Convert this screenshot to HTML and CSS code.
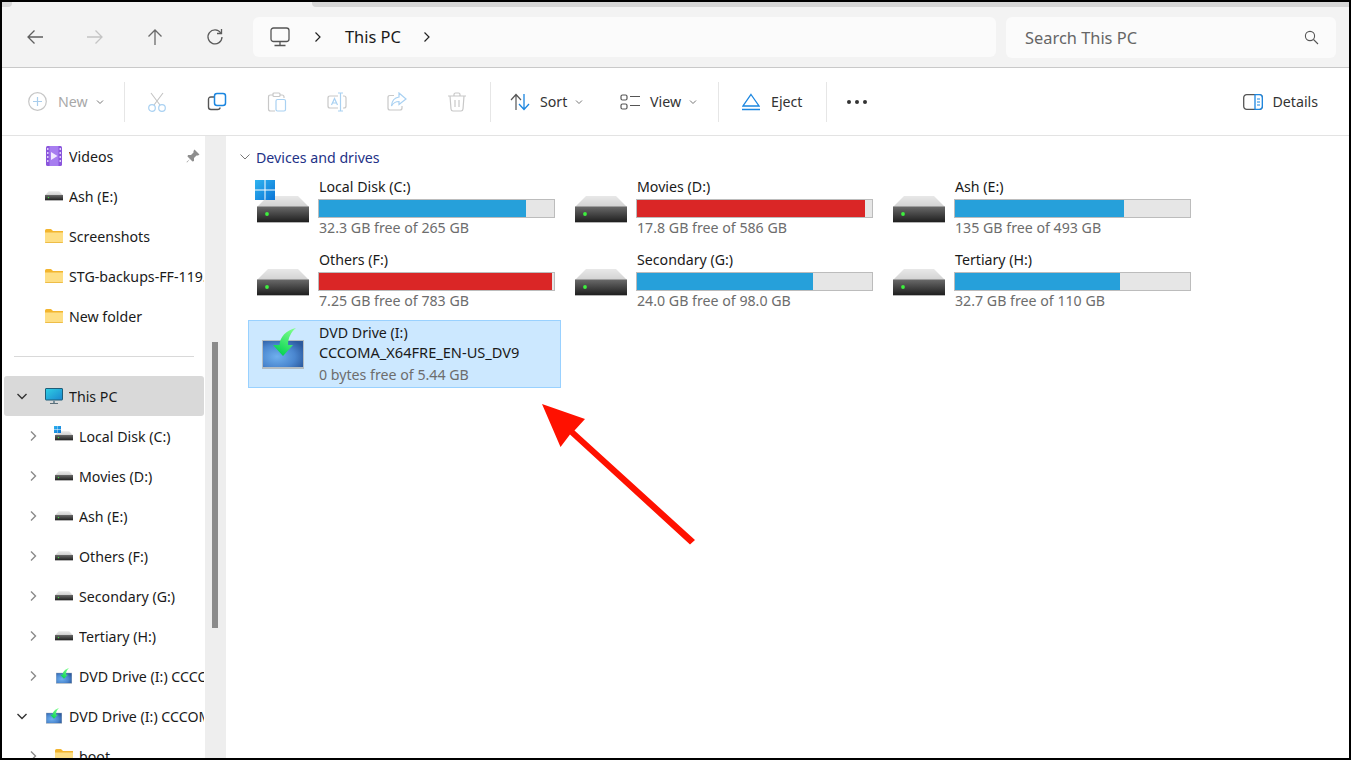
FILE: index.html
```html
<!DOCTYPE html>
<html lang="en">
<head>
<meta charset="utf-8">
<title>This PC</title>
<link rel="stylesheet" href="styles.css">
</head>
<body>
<svg class="defs" aria-hidden="true">
  <defs>
    <linearGradient id="face" x1="0" y1="0" x2="0" y2="1"><stop offset="0" stop-color="#6a6a6a"/><stop offset="1" stop-color="#1f1f1f"/></linearGradient>
    <linearGradient id="lid" x1="0" y1="0" x2="0" y2="1"><stop offset="0" stop-color="#e8e8e8"/><stop offset="1" stop-color="#d2d2d2"/></linearGradient>
    <linearGradient id="win" x1="0" y1="0" x2="1" y2="1"><stop offset="0" stop-color="#2fb4f0"/><stop offset="1" stop-color="#0a74d6"/></linearGradient>
    <radialGradient id="disc" cx="0.35" cy="0.6" r="0.75"><stop offset="0" stop-color="#6fb0ee"/><stop offset="0.6" stop-color="#4a86cf"/><stop offset="1" stop-color="#2c5a9e"/></radialGradient>
    <linearGradient id="grn" x1="0.8" y1="0" x2="0.3" y2="1"><stop offset="0" stop-color="#7dff8a"/><stop offset="1" stop-color="#00d050"/></linearGradient>
    <linearGradient id="pc" x1="0" y1="0" x2="1" y2="1"><stop offset="0" stop-color="#2fd0e4"/><stop offset="1" stop-color="#1a86cf"/></linearGradient>
    <symbol id="drive" viewBox="0 0 52 27">
      <path d="M11 0H41L52 11H0Z" fill="url(#lid)"/>
      <rect y="10.5" width="52" height="15.5" fill="url(#face)"/>
      <rect y="26" width="52" height="1" fill="#b4b4b4"/>
      <circle cx="10" cy="18" r="1.9" fill="#3ef03e"/>
    </symbol>
    <symbol id="winlogo" viewBox="0 0 20 20">
      <path d="M0 0H9.5V9.5H0ZM10.5 0H20V9.5H10.5ZM0 10.5H9.5V20H0ZM10.5 10.5H20V20H10.5Z" fill="url(#win)"/>
    </symbol>
    <symbol id="dvd" viewBox="0 0 42 41">
      <rect y="12" width="42" height="29" fill="#b3bcc2"/>
      <rect x="1" y="13" width="40" height="26" fill="url(#disc)"/>
      <path d="M11 17H17.5C18 9 24 2 34 0C29 4 26 10 26 17H31L21 28Z" fill="url(#grn)"/>
    </symbol>
    <symbol id="folder" viewBox="0 0 18 14">
      <path d="M0 1.5Q0 0 1.5 0H6L8 2H18V4H0Z" fill="#f3b52e"/>
      <path d="M0 3.5H18V13Q18 14 17 14H1Q0 14 0 13Z" fill="#fedf85"/>
      <path d="M0 13H18V13.2Q18 14 17 14H1Q0 14 0 13.2Z" fill="#eebd47"/>
    </symbol>
    <symbol id="video" viewBox="0 0 16 20">
      <rect width="16" height="20" rx="1.5" fill="#8a55dc"/>
      <rect x="3.5" y="0" width="9" height="20" fill="#a77df0"/>
      <path d="M5 6L11.5 10L5 14Z" fill="#f1e9ff"/>
      <path d="M1 2h1.5v2H1zM1 6h1.5v2H1zM1 10h1.5v2H1zM1 14h1.5v2H1zM13.5 2H15v2h-1.500zM13.500 6H15v2h-1.500zM13.500 10H15v2h-1.500zM13.500 14H15v2h-1.500z" fill="#dccdfa"/>
    </symbol>
    <symbol id="thispc" viewBox="0 0 18 16">
      <rect x="0.500" y="0.500" width="17" height="11.500" rx="0.500" fill="url(#pc)" stroke="#1f5d78"/>
      <rect x="8" y="12" width="2" height="3" fill="#78909c"/>
      <rect x="5" y="15" width="8" height="1" fill="#5b6f7a"/>
    </symbol>
    <symbol id="chev-r" viewBox="0 0 12 12"><path d="M4 1.500L8.500 6L4 10.500" fill="none" stroke="#8a8a8a" stroke-width="1.400"/></symbol>
    <symbol id="chev-a" viewBox="0 0 12 12"><path d="M3.500 1.500L8 6L3.500 10.500" fill="none" stroke="#222" stroke-width="1.200"/></symbol>
    <symbol id="chev-d" viewBox="0 0 12 12"><path d="M1.500 4L6 8.500L10.500 4" fill="none" stroke="#333" stroke-width="1.400"/></symbol>
    <symbol id="caret" viewBox="0 0 8 6"><path d="M1 1.500L4 4.500L7 1.500" fill="none" stroke="#777" stroke-width="1"/></symbol>
  </defs>
</svg>

<div class="window">
  <div class="tabstrip"><span class="tab-left"></span><span class="tab-gap"></span><span class="tab-right"></span></div>

  <header class="navbar">
    <button class="nav-btn">
      <svg width="18" height="16" viewBox="0 0 18 16"><path d="M17 8H2M8.500 1.500L2 8L8.500 14.500" fill="none" stroke="#5f5f5f" stroke-width="1.300"/></svg>
    </button>
    <button class="nav-btn">
      <svg width="18" height="16" viewBox="0 0 18 16"><path d="M1 8H16M9.500 1.500L16 8L9.500 14.500" fill="none" stroke="#c4c4c4" stroke-width="1.300"/></svg>
    </button>
    <button class="nav-btn">
      <svg width="16" height="18" viewBox="0 0 16 18"><path d="M8 17V2M1.500 8.500L8 2L14.500 8.500" fill="none" stroke="#6a6a6a" stroke-width="1.300"/></svg>
    </button>
    <button class="nav-btn">
      <svg width="18" height="18" viewBox="0 0 18 18"><path d="M14.800 5A7 7 0 1 0 16 9" fill="none" stroke="#5a5a5a" stroke-width="1.300"/><path d="M15.500 1V5.500H11" fill="none" stroke="#5a5a5a" stroke-width="1.300"/></svg>
    </button>
    <div class="address">
      <svg class="addr-pc" width="20" height="20" viewBox="0 0 20 20"><rect x="1" y="1" width="18" height="13.500" rx="2.500" fill="none" stroke="#555" stroke-width="1.300"/><path d="M10 14.500V18M4.500 18.500H15.500" fill="none" stroke="#555" stroke-width="1.300"/></svg>
      <svg class="addr-chev" width="12" height="12"><use href="#chev-a"/></svg>
      <span class="addr-text">This PC</span>
      <svg class="addr-chev2" width="12" height="12"><use href="#chev-a"/></svg>
    </div>
    <div class="search">
      <span class="search-text">Search This PC</span>
      <svg width="15" height="15" viewBox="0 0 15 15"><circle cx="6" cy="6" r="4.600" fill="none" stroke="#555" stroke-width="1.100"/><path d="M9.500 9.500L14 14" stroke="#555" stroke-width="1.100"/></svg>
    </div>
  </header>

  <div class="cmdbar">
    <div class="cmd-new">
      <svg width="19" height="19" viewBox="0 0 19 19"><circle cx="9.500" cy="9.500" r="8.800" fill="none" stroke="#c6c6c6" stroke-width="1.200"/><path d="M9.500 5V14M5 9.500H14" stroke="#a9cdec" stroke-width="1.200"/></svg>
      <span class="cmd-label disabled">New</span>
      <svg class="caret" width="8" height="6"><use href="#caret"/></svg>
    </div>
    <span class="sep"></span>
    <div class="icon-btn">
      <svg width="20" height="20" viewBox="0 0 20 20"><path d="M4 1L13 13M16 1L7 13" fill="none" stroke="#c4c4c4" stroke-width="1.100"/><circle cx="5" cy="16" r="3.300" fill="none" stroke="#a9d1f2" stroke-width="1.200"/><circle cx="15" cy="16" r="3.300" fill="none" stroke="#a9d1f2" stroke-width="1.200"/></svg>
    </div>
    <div class="icon-btn">
      <svg width="20" height="20" viewBox="0 0 20 20"><path d="M7 5H4Q1.500 5 1.500 7.500V15Q1.500 17.500 4 17.500H10.500Q13 17.500 13 15.500" fill="none" stroke="#555" stroke-width="1.400"/><rect x="7.500" y="1.500" width="11" height="12" rx="2.500" fill="none" stroke="#1b86e0" stroke-width="1.500"/></svg>
    </div>
    <div class="icon-btn">
      <svg width="20" height="20" viewBox="0 0 20 20"><path d="M6 3H3.500Q1.500 3 1.500 5V17Q1.500 19 3.500 19H8M13 3H15Q17 3 17 5V6" fill="none" stroke="#c8c8c8" stroke-width="1.200"/><rect x="6" y="1" width="7" height="3.500" rx="1" fill="none" stroke="#c8c8c8" stroke-width="1.200"/><rect x="9" y="7.500" width="9.500" height="11.500" rx="1.500" fill="none" stroke="#a9d1f2" stroke-width="1.200"/></svg>
    </div>
    <div class="icon-btn">
      <svg width="20" height="20" viewBox="0 0 20 20"><path d="M11 4H3Q1 4 1 6V14Q1 16 3 16H11M16 4H17Q19 4 19 6V14Q19 16 17 16H16" fill="none" stroke="#c8c8c8" stroke-width="1.200"/><path d="M11 1H16M13.500 1V19M11 19H16M4.500 13L7.500 6.500L10.500 13M5.500 11H9.500" fill="none" stroke="#a9d1f2" stroke-width="1.200"/></svg>
    </div>
    <div class="icon-btn">
      <svg width="20" height="20" viewBox="0 0 20 20"><path d="M7 3.500H3Q1 3.500 1 5.500V16Q1 18 3 18H13Q15 18 15 16V14" fill="none" stroke="#c8c8c8" stroke-width="1.200"/><path d="M12 1L19 7L12 12.500V9.500Q7 9.500 4.500 14Q5 6 12 5Z" fill="none" stroke="#a9d1f2" stroke-width="1.200"/></svg>
    </div>
    <div class="icon-btn">
      <svg width="20" height="20" viewBox="0 0 20 20"><path d="M1 4H19M7 4V2.500Q7 1 8.500 1H11.500Q13 1 13 2.500V4M3 4L4 17Q4.200 19 6 19H14Q15.800 19 16 17L17 4M8 8V15M12 8V15" fill="none" stroke="#c8c8c8" stroke-width="1.200"/></svg>
    </div>
    <span class="sep sep-b"></span>
    <div class="cmd-menu cmd-sort">
      <svg width="20" height="18" viewBox="0 0 20 18"><path d="M6 17V2M1 7L6 1.500L11 7" fill="none" stroke="#555" stroke-width="1.200"/><path d="M14 1V16M9 11L14 16.500L19 11" fill="none" stroke="#1b86e0" stroke-width="1.300"/></svg>
      <span class="cmd-label">Sort</span>
      <svg class="caret" width="8" height="6"><use href="#caret"/></svg>
    </div>
    <div class="cmd-menu cmd-view">
      <svg width="20" height="16" viewBox="0 0 20 16"><rect x="1" y="1" width="6" height="5" rx="1.500" fill="none" stroke="#555" stroke-width="1.200"/><rect x="1" y="10" width="6" height="5" rx="1.500" fill="none" stroke="#555" stroke-width="1.200"/><path d="M10 2.500H20M10 11.500H20" stroke="#555" stroke-width="1.200"/></svg>
      <span class="cmd-label">View</span>
      <svg class="caret" width="8" height="6"><use href="#caret"/></svg>
    </div>
    <span class="sep sep-c"></span>
    <div class="cmd-menu cmd-eject">
      <svg width="18" height="18" viewBox="0 0 18 18"><path d="M9 1.500L17 13H1Z" fill="none" stroke="#1b86e0" stroke-width="1.300"/><path d="M0 16.500H18" stroke="#1b86e0" stroke-width="1.500"/></svg>
      <span class="cmd-label">Eject</span>
    </div>
    <span class="sep sep-d"></span>
    <div class="dots"><i></i><i></i><i></i></div>
    <div class="details">
      <svg width="20" height="16" viewBox="0 0 20 16"><rect x="0.700" y="0.700" width="18.600" height="14.600" rx="3" fill="none" stroke="#555" stroke-width="1.300"/><path d="M12 0.700H16.300Q19.300 0.700 19.300 3.700V12.300Q19.300 15.300 16.300 15.300H12Z" fill="#fff" stroke="#1b86e0" stroke-width="1.300"/><path d="M14 5H17M14 8H17M14 11H17" stroke="#1b86e0"/></svg>
      <span class="cmd-label">Details</span>
    </div>
  </div>

  <div class="content">
    <nav class="sidebar">
      <div class="row"><span class="chev"></span><svg class="ic-video"><use href="#video"/></svg><span class="label">Videos</span>
        <svg class="pin" width="14" height="14" viewBox="0 0 14 14"><path d="M8.500 0.500L13.500 5.500L12 6.500L10.500 6.500L8 9L8 12L6.500 12.500L4 10L1 13.500L0.500 13L4 10L1.500 7.500L2 6L5 6L7.500 3.500L7.500 2Z" fill="#8e8e8e"/></svg>
      </div>
      <div class="row"><span class="chev"></span><svg class="ic-drive"><use href="#drive"/></svg><span class="label">Ash (E:)</span></div>
      <div class="row"><span class="chev"></span><svg class="ic-folder"><use href="#folder"/></svg><span class="label">Screenshots</span></div>
      <div class="row"><span class="chev"></span><svg class="ic-folder"><use href="#folder"/></svg><span class="label">STG-backups-FF-119.0.1-20231107</span></div>
      <div class="row"><span class="chev"></span><svg class="ic-folder"><use href="#folder"/></svg><span class="label">New folder</span></div>
      <div class="divider"></div>
      <div class="row selected"><svg class="chev"><use href="#chev-d"/></svg><svg class="ic-pc"><use href="#thispc"/></svg><span class="label">This PC</span></div>
      <div class="row sub"><svg class="chev"><use href="#chev-r"/></svg><span class="ic-wrap"><svg class="ic-mini-win"><use href="#winlogo"/></svg><svg class="ic-drive"><use href="#drive"/></svg></span><span class="label">Local Disk (C:)</span></div>
      <div class="row sub"><svg class="chev"><use href="#chev-r"/></svg><svg class="ic-drive"><use href="#drive"/></svg><span class="label">Movies (D:)</span></div>
      <div class="row sub"><svg class="chev"><use href="#chev-r"/></svg><svg class="ic-drive"><use href="#drive"/></svg><span class="label">Ash (E:)</span></div>
      <div class="row sub"><svg class="chev"><use href="#chev-r"/></svg><svg class="ic-drive"><use href="#drive"/></svg><span class="label">Others (F:)</span></div>
      <div class="row sub"><svg class="chev"><use href="#chev-r"/></svg><svg class="ic-drive"><use href="#drive"/></svg><span class="label">Secondary (G:)</span></div>
      <div class="row sub"><svg class="chev"><use href="#chev-r"/></svg><svg class="ic-drive"><use href="#drive"/></svg><span class="label">Tertiary (H:)</span></div>
      <div class="row sub"><svg class="chev"><use href="#chev-r"/></svg><svg class="ic-dvd"><use href="#dvd"/></svg><span class="label">DVD Drive (I:) CCCOMA_X64FRE_EN-US_DV9</span></div>
      <div class="row"><svg class="chev"><use href="#chev-d"/></svg><svg class="ic-dvd"><use href="#dvd"/></svg><span class="label">DVD Drive (I:) CCCOMA_X64FRE_EN-US_DV9</span></div>
      <div class="row sub"><svg class="chev"><use href="#chev-r"/></svg><svg class="ic-folder"><use href="#folder"/></svg><span class="label">boot</span></div>
    </nav>
    <div class="track"><div class="thumb"></div></div>

    <main class="main">
      <div class="section-head">
        <svg width="10" height="6" viewBox="0 0 10 6"><path d="M0.500 0.500L5 5L9.500 0.500" fill="none" stroke="#777" stroke-width="1"/></svg>
        <span>Devices and drives</span>
      </div>
      <div class="tiles">
        <div class="tile">
          <svg class="tile-icon"><use href="#drive" x="2" y="16" width="52" height="27"/><use href="#winlogo" width="20" height="20"/></svg>
          <div class="tile-body"><div class="name">Local Disk (C:)</div><div class="bar"><div class="fill" style="width:88%"></div></div><div class="free">32.3 GB free of 265 GB</div></div>
        </div>
        <div class="tile">
          <svg class="tile-icon"><use href="#drive" x="2" y="16" width="52" height="27"/></svg>
          <div class="tile-body"><div class="name">Movies (D:)</div><div class="bar"><div class="fill full" style="width:97%"></div></div><div class="free">17.8 GB free of 586 GB</div></div>
        </div>
        <div class="tile">
          <svg class="tile-icon"><use href="#drive" x="2" y="16" width="52" height="27"/></svg>
          <div class="tile-body"><div class="name">Ash (E:)</div><div class="bar"><div class="fill" style="width:72%"></div></div><div class="free">135 GB free of 493 GB</div></div>
        </div>
        <div class="tile">
          <svg class="tile-icon"><use href="#drive" x="2" y="16" width="52" height="27"/></svg>
          <div class="tile-body"><div class="name">Others (F:)</div><div class="bar"><div class="fill full" style="width:99%"></div></div><div class="free">7.25 GB free of 783 GB</div></div>
        </div>
        <div class="tile">
          <svg class="tile-icon"><use href="#drive" x="2" y="16" width="52" height="27"/></svg>
          <div class="tile-body"><div class="name">Secondary (G:)</div><div class="bar"><div class="fill" style="width:75%"></div></div><div class="free">24.0 GB free of 98.0 GB</div></div>
        </div>
        <div class="tile">
          <svg class="tile-icon"><use href="#drive" x="2" y="16" width="52" height="27"/></svg>
          <div class="tile-body"><div class="name">Tertiary (H:)</div><div class="bar"><div class="fill" style="width:70%"></div></div><div class="free">32.7 GB free of 110 GB</div></div>
        </div>
        <div class="tile tile-dvd">
          <svg class="dvd-icon"><use href="#dvd"/></svg>
          <div class="tile-body"><div class="name">DVD Drive (I:)</div><div class="name vol">CCCOMA_X64FRE_EN-US_DV9</div><div class="free free-dvd">0 bytes free of 5.44 GB</div></div>
        </div>
      </div>
    </main>
  </div>
</div>

<svg class="arrow" width="180" height="160" viewBox="530 395 180 160" aria-hidden="true"><path d="M542 404L585 419L574.500 430.500L695 540L690 544.500L570 434.500L560.500 447Z" fill="#ff1100"/></svg>
</body>
</html>
```

FILE: styles.css
```css
* { box-sizing: border-box; }
html, body { margin: 0; height: 100%; overflow: hidden; }
body {
  background: #000;
  font-family: "Noto Sans", "Open Sans", sans-serif;
  font-size: 14.2px;
  color: #1a1a1a;
  position: relative;
}
.defs { display: block; width: 0; height: 0; overflow: hidden; }
svg { display: block; flex: none; }
button { border: 0; background: none; padding: 0; }

.window {
  margin: 2px 2px 0;
  height: 756px;
  background: #fff;
  display: flex;
  flex-direction: column;
  overflow: hidden;
}

.tabstrip { height: 6px; background: #f3f3f3; display: flex; flex: none; }
.tab-left { width: 10px; height: 5px; background: #d9d9d9; border-bottom-right-radius: 4px; }
.tab-gap { width: 300px; }
.tab-right { flex: 1; height: 5px; background: #d6d6d6; border-bottom-left-radius: 4px; }

.navbar {
  height: 60px;
  flex: none;
  background: #f3f3f3;
  border-bottom: 1px solid #c9c9c9;
  display: flex;
  align-items: flex-start;
  padding: 9px 13px 0 3px;
}
.nav-btn { width: 60px; height: 40px; display: flex; align-items: center; justify-content: center; }
.address {
  width: 743px;
  height: 40px;
  margin-left: 8px;
  background: #fbfbfb;
  border-radius: 6px;
  display: flex;
  align-items: center;
  color: #1a1a1a;
  font-size: 16.4px;
  padding-left: 17px;
}
.addr-chev { margin-left: 22px; }
.addr-text { margin-left: 21px; margin-bottom: 2px; }
.addr-chev2 { margin-left: 20px; }
.search {
  flex: 1;
  height: 41px;
  margin-left: 10px;
  background: #fbfbfb;
  border-radius: 6px;
  display: flex;
  align-items: center;
  justify-content: space-between;
  padding: 0 17px 0 19px;
  font-size: 16.4px;
  color: #666;
}

.cmdbar {
  height: 68px;
  flex: none;
  background: #fff;
  border-bottom: 1px solid #e3e3e3;
  display: flex;
  align-items: center;
  padding: 0 31px 0 26px;
}
.cmd-new { width: 96px; display: flex; align-items: center; }
.cmd-new .cmd-label { margin-left: 11px; }
.caret { margin-left: 8px; }
.cmd-label { color: #333; white-space: nowrap; }
.cmd-label.disabled { color: #a8a8a8; }
.sep { width: 1px; height: 40px; background: #e6e6e6; flex: none; }
.icon-btn { width: 60px; display: flex; justify-content: center; }
.sep + .icon-btn { margin-left: 2px; }
.sep-b { margin-left: 3px; }
.cmd-menu { display: flex; align-items: center; }
.cmd-menu .cmd-label { margin-left: 10px; }
.cmd-sort { margin-left: 19px; width: 110px; }
.cmd-view { width: 98px; }
.cmd-eject { margin-left: 23px; width: 84px; }
.cmd-eject .cmd-label { margin-left: 11px; }
.dots { margin-left: 20px; display: flex; gap: 4px; }
.dots i { width: 4px; height: 4px; border-radius: 50%; background: #333; display: block; }
.details { margin-left: auto; display: flex; align-items: center; gap: 9px; }

.content { flex: 1; min-height: 0; display: flex; }
.sidebar { width: 203px; flex: none; overflow: hidden; }
.row {
  height: 40px;
  width: 200px;
  margin-left: 2px;
  padding-left: 12px;
  display: flex;
  align-items: center;
  border-radius: 3px;
}
.row.selected { background: #d9d9d9; }
.row.sub { padding-left: 23px; }
.chev { width: 12px; height: 12px; margin-right: 17px; flex: none; display: block; }
.row.sub .chev { margin-right: 16px; }
.label { flex: 1; min-width: 0; white-space: nowrap; overflow: hidden; margin-left: 6px; }
.ic-video { width: 16px; height: 20px; margin: 0 1px; }
.ic-drive { width: 18px; height: 10px; }
.ic-folder { width: 18px; height: 14px; }
.ic-pc { width: 18px; height: 16px; }
.ic-dvd { width: 16px; height: 16px; margin: 0 1px; }
.ic-wrap { width: 18px; height: 10px; position: relative; display: block; flex: none; }
.ic-mini-win { width: 7px; height: 7px; position: absolute; left: -1px; top: -5px; }
.pin { margin-right: 4px; }
.divider { height: 40px; display: flex; align-items: center; margin: 0 11px 0 12px; }
.divider::before { content: ""; display: block; width: 100%; height: 1px; background: #d9d9d9; }

.track { width: 21px; flex: none; background: #eeeeee; padding: 206px 7px 0; }
.thumb { width: 6px; height: 286px; background: #8b8b8b; }

.main { flex: 1; min-width: 0; padding: 11px 0 0 22px; }
.section-head { height: 20px; margin: 0 0 7px -8px; display: flex; align-items: center; gap: 6px; color: #1e3287; }
.tiles { display: grid; grid-template-columns: repeat(3, 313px); grid-auto-rows: 68px; gap: 5px; }
.tile { border: 1px solid transparent; display: flex; align-items: flex-start; }
.tile-icon { width: 56px; height: 44px; margin: 5px 7px 0 6px; }
.tile-body { width: 237px; flex: none; padding-top: 3px; }
.name { line-height: 18px; white-space: nowrap; margin-left: 1px; }
.bar { height: 19px; margin-top: 3px; border: 1px solid #bcbcbc; background: #e6e6e6; }
.fill { height: 100%; background: #26a0da; }
.fill.full { background: #da2626; }
.free { line-height: 20px; color: #6d6d6d; white-space: nowrap; margin-left: 1px; }

.tile-dvd { background: #cce8ff; border-color: #99d1ff; }
.dvd-icon { width: 42px; height: 41px; margin: 7px 14px 0 13px; }
.tile-dvd .tile-body { padding-top: 2px; }
.tile-dvd .name { line-height: 20px; }
.tile-dvd .vol { font-size: 14.6px; margin-top: -1px; }
.free-dvd { margin-top: 3px; }

.arrow { position: absolute; left: 530px; top: 395px; }
```
